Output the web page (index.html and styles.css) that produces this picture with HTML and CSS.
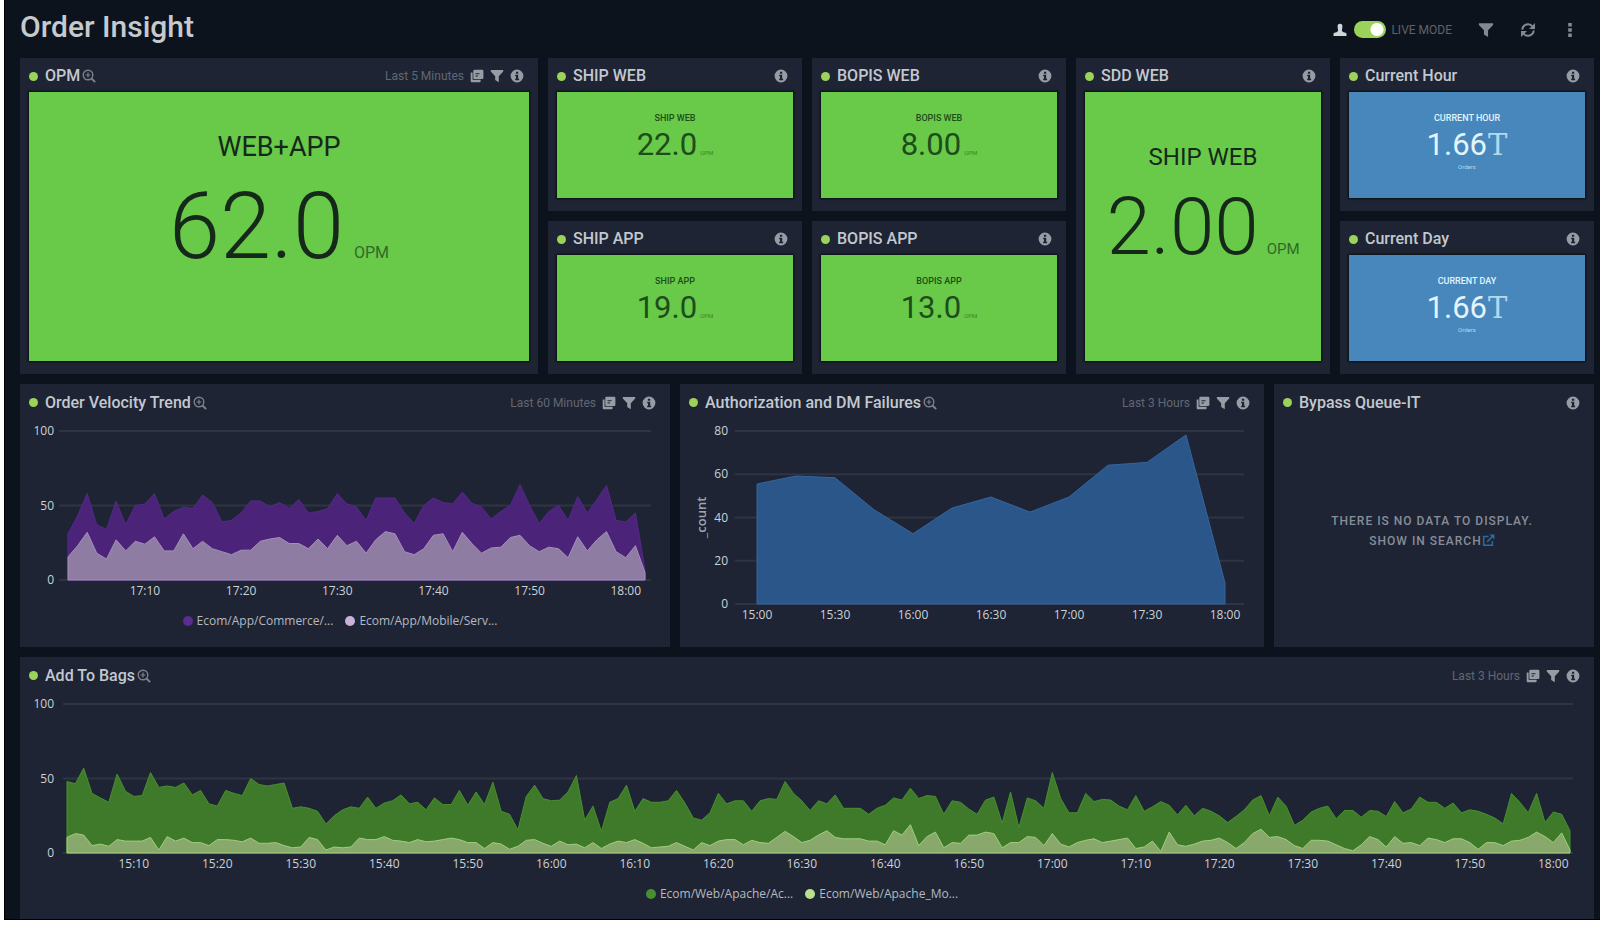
FILE: index.html
```html
<!DOCTYPE html>
<html lang="en">
<head>
<meta charset="utf-8">
<title>Order Insight</title>
<link rel="stylesheet" href="styles.css">
</head>
<body>
<svg class="sprite" aria-hidden="true">
  <symbol id="i-info" viewBox="0 0 14 14"><path fill-rule="evenodd" d="M7 .6a6.4 6.4 0 1 0 0 12.8A6.4 6.4 0 0 0 7 .6zM5.9 2.7h2.3v2H5.9zM5.2 5.7h3v4h.9v1.5h-4V9.700h.9V7.200h-.8z"/></symbol>
  <symbol id="i-filter" viewBox="0 0 14 14"><path d="M.8 1h12.400v1.600L8.800 7.200V13.200L5.200 11V7.200L.8 2.600z"/></symbol>
  <symbol id="i-copy" viewBox="0 0 14 14"><path fill-rule="evenodd" d="M4.500.8h7.700a1.200 1.200 0 0 1 1.200 1.200v6.700a1.200 1.200 0 0 1-1.200 1.200H4.500a1.200 1.200 0 0 1-1.200-1.200V2A1.200 1.200 0 0 1 4.500.8zM5.500 4.200v1h4v-1zM5.500 6.500v1h2.500v-1z"/><path d="M.7 3.500h1.900v7.200h8v1.600a1 1 0 0 1-1 1H1.700a1 1 0 0 1-1-1z"/></symbol>
  <symbol id="i-zoom" viewBox="0 0 14 14"><g fill="none" stroke="currentColor"><circle cx="6" cy="6" r="4.800" stroke-width="1.400"/><path d="M9.500 9.500l3.600 3.600" stroke-width="2"/><path d="M3.600 6h4.800M6 3.600v4.800" stroke-width="1.200"/></g></symbol>
  <symbol id="i-user" viewBox="0 0 14 14"><path d="M7 .8a2.400 2.400 0 0 1 2.400 2.600c0 1.500-.4 2.800-.5 4.200.1.900.8 1.300 1.600 1.600l2 .5c.8.300 1 .7 1 1.400v2H.5v-2c0-.7.2-1.100 1-1.400l2-.5c.8-.3 1.500-.7 1.600-1.600-.1-1.400-.5-2.700-.5-4.200A2.400 2.400 0 0 1 7 .8z"/></symbol>
  <symbol id="i-refresh" viewBox="0 0 16 16"><path fill="none" stroke="currentColor" stroke-width="2" d="M2.300 7.600A5.700 5.700 0 0 1 12.500 4.500M13.700 8.400A5.700 5.700 0 0 1 3.500 11.500"/><path d="M15 1v6H9zM1 15V9h6z"/></symbol>
  <symbol id="i-more" viewBox="0 0 16 16"><path d="M6.200 1h3.600v3.400H6.200zM6.200 6.300h3.600v3.400H6.200zM6.200 11.600h3.600V15H6.200z"/></symbol>
  <symbol id="i-link" viewBox="0 0 14 14"><path fill="none" stroke="currentColor" stroke-width="1.600" d="M7 2.800H1.800v9.400h9.400V7.500M5.500 8.500l6-6"/><path d="M8 .6h5.400V6z"/></symbol>
</svg>

<main class="board">
  <header class="topbar">
    <h1 class="topbar-title">Order Insight</h1>
    <div class="tools">
      <label class="live">
        <svg class="icon"><use href="#i-user"/></svg>
        <input class="switch" type="checkbox" checked>
        <span>LIVE MODE</span>
      </label>
      <button class="tool" aria-label="Filter"><svg class="icon-lg"><use href="#i-filter"/></svg></button>
      <button class="tool" aria-label="Refresh"><svg class="icon-lg"><use href="#i-refresh"/></svg></button>
      <button class="tool" aria-label="More"><svg class="icon-lg"><use href="#i-more"/></svg></button>
    </div>
  </header>

  <div class="metrics">
    <section class="panel tall wide">
      <header class="panel-head"><i class="dot"></i><h2>OPM</h2><button class="ib" aria-label="Zoom"><svg class="icon"><use href="#i-zoom"/></svg></button>
        <div class="meta"><span>Last 5 Minutes</span><button class="ib" aria-label="Copy"><svg class="icon"><use href="#i-copy"/></svg></button><button class="ib" aria-label="Filter"><svg class="icon"><use href="#i-filter"/></svg></button><button class="ib" aria-label="Info"><svg class="icon"><use href="#i-info"/></svg></button></div></header>
      <div class="tile big"><p class="label">WEB+APP</p><p class="value xl">62.0<small>OPM</small></p></div>
    </section>
    <section class="panel">
      <header class="panel-head"><i class="dot"></i><h2>SHIP WEB</h2><div class="meta"><button class="ib" aria-label="Info"><svg class="icon"><use href="#i-info"/></svg></button></div></header>
      <div class="tile"><p class="label">SHIP WEB</p><p class="value">22.0<small>OPM</small></p></div>
    </section>
    <section class="panel">
      <header class="panel-head"><i class="dot"></i><h2>BOPIS WEB</h2><div class="meta"><button class="ib" aria-label="Info"><svg class="icon"><use href="#i-info"/></svg></button></div></header>
      <div class="tile"><p class="label">BOPIS WEB</p><p class="value">8.00<small>OPM</small></p></div>
    </section>
    <section class="panel tall">
      <header class="panel-head"><i class="dot"></i><h2>SDD WEB</h2><div class="meta"><button class="ib" aria-label="Info"><svg class="icon"><use href="#i-info"/></svg></button></div></header>
      <div class="tile mid"><p class="label">SHIP WEB</p><p class="value lg">2.00<small>OPM</small></p></div>
    </section>
    <section class="panel">
      <header class="panel-head"><i class="dot"></i><h2>Current Hour</h2><div class="meta"><button class="ib" aria-label="Info"><svg class="icon"><use href="#i-info"/></svg></button></div></header>
      <div class="tile blue"><p class="label">CURRENT HOUR</p><p class="value">1.66<span class="unit">T</span></p><p class="note">Orders</p></div>
    </section>
    <section class="panel">
      <header class="panel-head"><i class="dot"></i><h2>SHIP APP</h2><div class="meta"><button class="ib" aria-label="Info"><svg class="icon"><use href="#i-info"/></svg></button></div></header>
      <div class="tile"><p class="label">SHIP APP</p><p class="value">19.0<small>OPM</small></p></div>
    </section>
    <section class="panel">
      <header class="panel-head"><i class="dot"></i><h2>BOPIS APP</h2><div class="meta"><button class="ib" aria-label="Info"><svg class="icon"><use href="#i-info"/></svg></button></div></header>
      <div class="tile"><p class="label">BOPIS APP</p><p class="value">13.0<small>OPM</small></p></div>
    </section>
    <section class="panel">
      <header class="panel-head"><i class="dot"></i><h2>Current Day</h2><div class="meta"><button class="ib" aria-label="Info"><svg class="icon"><use href="#i-info"/></svg></button></div></header>
      <div class="tile blue"><p class="label">CURRENT DAY</p><p class="value">1.66<span class="unit">T</span></p><p class="note">Orders</p></div>
    </section>
  </div>

  <div class="trends">
    <section class="panel">
      <header class="panel-head"><i class="dot"></i><h2>Order Velocity Trend</h2><button class="ib" aria-label="Zoom"><svg class="icon"><use href="#i-zoom"/></svg></button>
        <div class="meta"><span>Last 60 Minutes</span><button class="ib" aria-label="Copy"><svg class="icon"><use href="#i-copy"/></svg></button><button class="ib" aria-label="Filter"><svg class="icon"><use href="#i-filter"/></svg></button><button class="ib" aria-label="Info"><svg class="icon"><use href="#i-info"/></svg></button></div></header>
      <svg class="chart" id="velocity" role="img" aria-label="Order Velocity Trend"></svg>
      <div class="legend"><span class="key purple">Ecom/App/Commerce/...</span><span class="key lilac">Ecom/App/Mobile/Serv...</span></div>
    </section>
    <section class="panel">
      <header class="panel-head"><i class="dot"></i><h2>Authorization and DM Failures</h2><button class="ib" aria-label="Zoom"><svg class="icon"><use href="#i-zoom"/></svg></button>
        <div class="meta"><span>Last 3 Hours</span><button class="ib" aria-label="Copy"><svg class="icon"><use href="#i-copy"/></svg></button><button class="ib" aria-label="Filter"><svg class="icon"><use href="#i-filter"/></svg></button><button class="ib" aria-label="Info"><svg class="icon"><use href="#i-info"/></svg></button></div></header>
      <svg class="chart chart-tall" id="failures" role="img" aria-label="Authorization and DM Failures"></svg>
    </section>
    <section class="panel">
      <header class="panel-head"><i class="dot"></i><h2>Bypass Queue-IT</h2><div class="meta"><button class="ib" aria-label="Info"><svg class="icon"><use href="#i-info"/></svg></button></div></header>
      <div class="empty"><p>THERE IS NO DATA TO DISPLAY.</p><a href="#search">SHOW IN SEARCH<svg class="icon"><use href="#i-link"/></svg></a></div>
    </section>
  </div>

  <section class="panel last">
    <header class="panel-head"><i class="dot"></i><h2>Add To Bags</h2><button class="ib" aria-label="Zoom"><svg class="icon"><use href="#i-zoom"/></svg></button>
      <div class="meta"><span>Last 3 Hours</span><button class="ib" aria-label="Copy"><svg class="icon"><use href="#i-copy"/></svg></button><button class="ib" aria-label="Filter"><svg class="icon"><use href="#i-filter"/></svg></button><button class="ib" aria-label="Info"><svg class="icon"><use href="#i-info"/></svg></button></div></header>
    <svg class="chart" id="bags" role="img" aria-label="Add To Bags"></svg>
    <div class="legend"><span class="key green">Ecom/Web/Apache/Ac...</span><span class="key lime">Ecom/Web/Apache_Mo...</span></div>
  </section>
</main>
<script src="charts.js"></script>
</body>
</html>
```
FILE: styles.css
```css
* { box-sizing: border-box; }
body { margin: 0; background: #fff; font-family: Roboto, "Liberation Sans", sans-serif; color: #c3c8d0; }
h1, h2, p { margin: 0; }
button { border: 0; padding: 0; background: none; color: inherit; font: inherit; cursor: pointer; }
.sprite { display: none; }
.icon { width: 14px; height: 14px; fill: currentColor; display: block; }
.icon-lg { width: 16px; height: 16px; fill: currentColor; display: block; }

.board { margin-left: 4px; padding: 0 6px 0 15px; background: #0d131d; border-left: 1px solid #000; border-bottom: 1px solid #000; }
.topbar { display: flex; justify-content: space-between; align-items: center; height: 58px; padding-bottom: 4px; }
.topbar-title { font-size: 30px; line-height: 36px; font-weight: 500; color: #c6c9ce; }
.tools { display: flex; align-items: center; gap: 26px; padding: 5px 16px 0 0; color: #84888f; }
.live { display: flex; align-items: center; gap: 5px; font-size: 12px; line-height: 16px; color: #5d636d; }
.live .icon { color: #d2d4d8; margin-right: 2px; }
.switch { appearance: none; width: 32px; height: 17px; margin: 0; border-radius: 9px; background: radial-gradient(circle at 23px 50%, #fff 6px, transparent 7px), #9bd35a; }

.metrics { display: grid; grid-template-columns: repeat(6, minmax(0, 1fr)); gap: 10px; }
.wide { grid-column: span 2; }
.tall { grid-row: span 2; }
.panel { display: flex; flex-direction: column; min-width: 0; padding: 0 9px 13px; background: #1e2433; }
.panel-head { display: flex; align-items: center; height: 34px; padding: 3px 5px 0 0; }
.metrics .panel-head { padding-top: 2px; }
.panel-head h2 { font-size: 16px; line-height: 20px; font-weight: 500; margin: 0 2px 0 7px; white-space: nowrap; }
.dot { width: 9px; height: 9px; border-radius: 50%; background: #9bd35a; }
.ib { color: #7c818c; }
.meta { display: flex; align-items: center; gap: 6px; margin-left: auto; font-size: 12px; line-height: 16px; color: #616772; white-space: nowrap; }
.meta .ib { color: #989ca5; }

.tile { flex: 1; min-height: 106px; padding-top: 19px; text-align: center; background: #69c948; color: #1d4d1b; box-shadow: 0 0 2px 1px #0a1013; }
.label { font-size: 9px; line-height: 14px; font-weight: 500; }
.value { margin-top: 4px; font-size: 31px; line-height: 32px; font-weight: 400; }
.value small { font-size: 6px; margin-left: 3px; color: #37852d; }
.big { padding-top: 39px; color: #15281a; }
.mid { padding-top: 49px; color: #15281a; }
.big .label { font-size: 27px; line-height: 32px; font-weight: 400; }
.mid .label { font-size: 24px; line-height: 32px; font-weight: 400; }
.value.xl { font-size: 92px; line-height: 120px; font-weight: 300; }
.value.lg { font-size: 80px; line-height: 100px; font-weight: 300; }
.value.xl small { font-size: 16px; margin-left: 10px; font-weight: 400; color: #2f6b2a; }
.value.lg small { font-size: 15px; margin-left: 8px; font-weight: 400; color: #2f6b2a; }
.blue { background: #4887bb; color: #e2f5fc; }
.unit { font-family: "DejaVu Serif", serif; font-size: 29px; margin-left: 1px; color: #b4d8ee; }
.note { font-size: 6px; line-height: 8px; margin-top: 2px; color: #b4d8ee; }

.trends { display: grid; grid-template-columns: 650fr 584fr 320fr; gap: 10px; margin: 10px 0; }
.trends .panel { padding-bottom: 16px; }
.last { padding-bottom: 15px; }
.chart { width: 100%; height: 182px; display: block; font: 12px "Open Sans", "Noto Sans", sans-serif; fill: #cdd1d8; }
.chart-tall { height: 208px; }
.axis-title { font-size: 13px; font-weight: 600; fill: #9ea3ad; }
.grid { stroke: #2e3442; stroke-width: 2; }
.s-purple { fill: #4b2479; stroke: #54298a; }
.s-lilac { fill: #8f7ca3; stroke: #a58fbb; }
.s-blue { fill: #2b5b90; fill-opacity: .92; stroke: #3465a0; }
.s-green { fill: #3f7a2a; stroke: #47902e; }
.s-lime { fill: #89a86b; stroke: #9fcf7c; }
.legend { display: flex; justify-content: center; gap: 12px; height: 20px; margin-top: 11px; padding-right: 10px; font: 12px/20px "Open Sans", "Noto Sans", sans-serif; color: #b4b9c2; }
.key { display: flex; align-items: center; gap: 4px; }
.key::before { content: ""; width: 10px; height: 10px; border-radius: 50%; background: currentColor; }
.purple::before { background: #5b2d91; }
.lilac::before { background: #c9b1dc; }
.green::before { background: #46902f; }
.lime::before { background: #b9e08c; }

.empty { flex: 1; display: flex; flex-direction: column; align-items: center; justify-content: center; padding: 12px 4px 0 0; font-size: 12px; line-height: 20px; font-weight: 500; letter-spacing: 1px; color: #878d99; }
.empty a { display: flex; align-items: center; color: inherit; text-decoration: none; }
.empty .icon { width: 13px; height: 13px; color: #2b6ca3; }
```
FILE: charts.js
```js
const charts = {
  velocity: {
    top: 13, base: 162, max: 100, ticks: [0, 50, 100],
    gridLeft: 30, gridRight: 10, left: 39, right: 16, labelX: 25,
    first: 8, every: 10, start: 17 * 60 + 2, step: 1,
    series: [
      ['s-purple', [31,43,58,37,34,53,37,50,51,58,41,46,49,48,57,52,39,40,45,53,53,49,52,48,54,45,46,48,58,51,49,40,55,55,55,45,38,50,55,52,51,59,51.5,49,41,46,50,64,50,38,46,50,40,56,45,54,63.5,40,39,45,7]],
      ['s-lilac', [15.5,23,32,18,14,27,19.5,26,24,29,19.5,19.5,31,21,26,21,19,17,20,20,26,27.5,28.5,24.5,24.5,21,27.5,21,30,23,26,18,27,32.5,31,19,17,21,30,31,19,32,24.5,18,21.5,22,28.5,30,23,19,22,21,15,29,19.5,27,32.5,19,15,23,5]]
    ]
  },
  failures: {
    top: 13, base: 186, max: 80, ticks: [0, 20, 40, 60, 80], title: '_count',
    gridLeft: 46, gridRight: 11, left: 68, right: 30, labelX: 39,
    first: 0, every: 2, start: 15 * 60, step: 15,
    series: [['s-blue', [55.5,59.2,58.4,43.6,32.5,44.4,49.5,42.5,49.5,64.2,65.5,78.2,9.7]]]
  },
  bags: {
    top: 13, base: 162, max: 100, ticks: [0, 50, 100],
    gridLeft: 34, gridRight: 12, left: 38, right: 15, labelX: 25,
    first: 8, every: 10, start: 15 * 60 + 2, step: 1,
    series: [
      ['s-green', [48,46.5,57,40,37,34,53,41.5,38,38.5,54,44,45,44,47,39,42,33,31.5,42,40,38.5,50,46,45,46,47,30,31,30,28,19.5,25,29,31,30,37.5,30,33.5,35,39,33,34,29,37,32.5,32.5,42,32,41,32.5,47.5,28,26,15.5,38,45.5,36.5,35,35.5,41,52,22,31.5,14.5,34,36.5,45.5,28,36.5,34,34,35,42,33.5,23.5,22,27,40,33,35,35,28,35,36.5,36,48,40,35,28.5,35,33,39,30,30,30,26,30,32,37,35.5,43.5,36.5,38.5,38,26,35,34,29.5,26,35.5,37.5,20,41,17,37,35,30,54,36.5,27,27,40,34.5,36,35.5,31.5,29,38.5,28,31,34.5,32,25.5,32,25,30,28,25,20.5,24.5,29,35.5,38.5,25,37.5,31.5,18.5,22,27.5,30,31.5,23,28.5,28.5,24,28.5,28,24.5,34.5,27,29.5,37.5,34,34,30,33.5,27,29,28,26,23.5,19.5,40,34,27,40,20.5,27.5,26,15]],
      ['s-lime', [10.5,13,12,5,6,4.5,9,8,8,8,10.5,2,11,8,10,7,7,5,9,9,8.5,7.5,10,6.5,6.5,7,5,3.5,4,10.5,9,2,4,3.5,4,10,9,9,11,8.5,8,7,9,7.5,8,9,10,9,7,7,3,7,6,2.5,4.5,8.5,9,6.5,4.5,8,5.5,6,3.5,7,3,6,8,7,9,6.5,3.5,4,4.5,7,4.5,2,7,5,8,9,9,5.5,8.5,7,6.5,10.5,14.5,11,7,8.5,12,15,10.5,9.5,9.5,9.5,8,8,5.5,15,12,19,5,11,14,3.5,7,6.5,12,12,14,13,3.5,7,7,11,10.5,5,13,6,4,7,8.5,9.5,7,8,9,10,3,4,8,1,14,5.5,4.5,6,8,8.5,10,7,3,7,13,16,10.5,11,9,5,3,8.5,8.5,8,5.5,3,1.5,5.5,11,9,4,11,6.5,7,5,10,9,7,9.5,9.5,7,2.5,7,7,5,8,8.5,10.5,14,11,7,13.5,2]]
    ]
  }
};

function clock(minutes) {
  return Math.floor(minutes / 60) + ':' + String(minutes % 60).padStart(2, '0');
}

function draw(id) {
  const c = charts[id];
  const svg = document.getElementById(id);
  const width = svg.clientWidth;
  const y = v => c.base - v / c.max * (c.base - c.top);
  const count = c.series[0][1].length;
  const x = i => c.left + i * (width - c.left - c.right) / (count - 1);
  let out = c.ticks.map(t =>
    `<line class="grid" x1="${c.gridLeft}" x2="${width - c.gridRight}" y1="${y(t)}" y2="${y(t)}"/>`).join('');
  for (const [cls, values] of c.series) {
    const pts = values.map((v, i) => `${x(i).toFixed(1)},${y(v).toFixed(1)}`).join(' ');
    out += `<polygon class="${cls}" points="${x(0)},${c.base} ${pts} ${x(count - 1)},${c.base}"/>`;
  }
  for (const t of c.ticks) out += `<text x="${c.labelX}" y="${y(t) + 4}" text-anchor="end">${t}</text>`;
  for (let i = c.first; i < count; i += c.every)
    out += `<text x="${x(i)}" y="${c.base + 15}" text-anchor="middle">${clock(c.start + i * c.step)}</text>`;
  if (c.title)
    out += `<text class="axis-title" transform="translate(17 ${(c.top + c.base) / 2}) rotate(-90)" text-anchor="middle">${c.title}</text>`;
  svg.innerHTML = out;
}

function drawAll() { Object.keys(charts).forEach(draw); }
drawAll();
window.addEventListener('resize', drawAll);
```
